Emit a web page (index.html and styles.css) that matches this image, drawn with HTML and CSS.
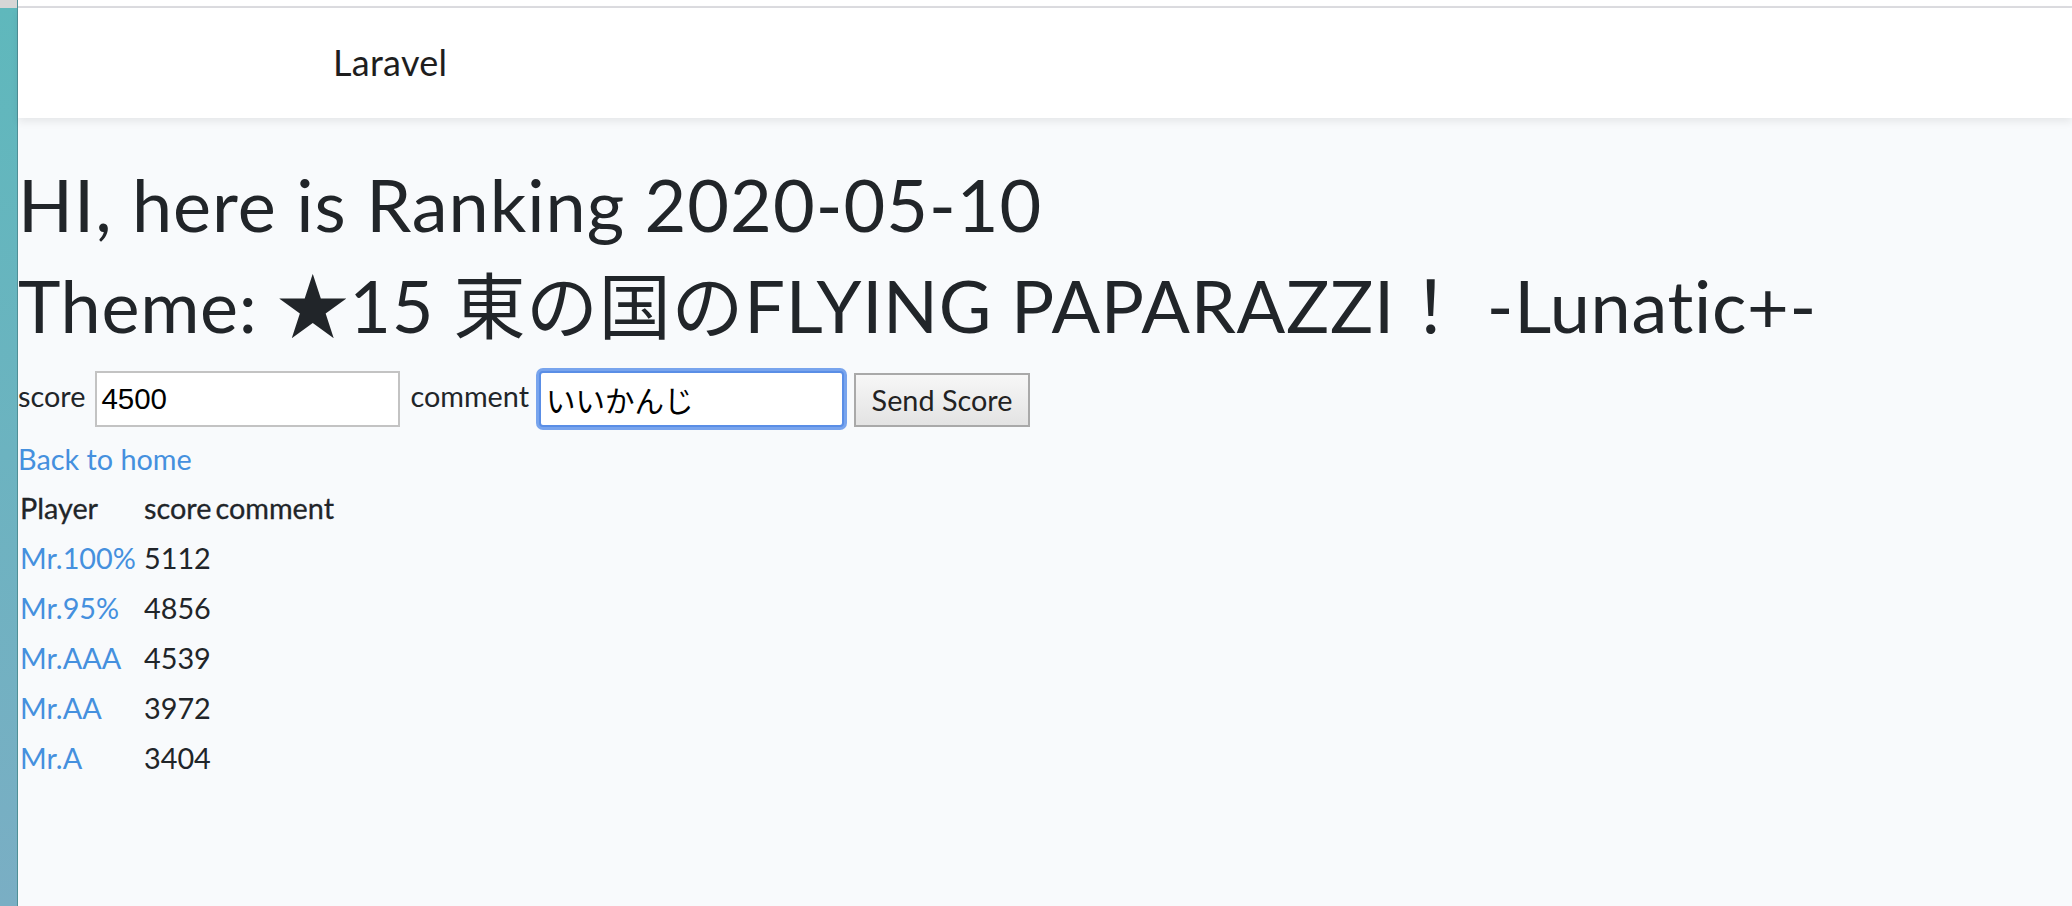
FILE: index.html
```html
<!DOCTYPE html>
<html lang="ja">
<head>
<meta charset="utf-8">
<title>Ranking</title>
<link rel="stylesheet" href="styles.css">
</head>
<body>
<div class="desktop"></div>
<div class="window">
  <div class="chrome-edge"></div>
  <nav class="navbar"><a class="brand" href="#">Laravel</a></nav>
  <main class="main">
    <h1 class="title">HI, here is Ranking 2020-05-10</h1>
    <h1 class="title title-theme">Theme: ★15 東の国のFLYING PAPARAZZI！ -Lunatic+-</h1>
    <form class="score-form">
      <label class="label">score</label>
      <input class="field" type="text" value="4500">
      <label class="label">comment</label>
      <input class="field focused" type="text" value="いいかんじ">
      <button class="send" type="button">Send Score</button>
    </form>
    <div class="back-row"><a class="link" href="#">Back to home</a></div>
    <table class="ranking">
      <thead>
        <tr><th class="col-player">Player</th><th>score</th><th>comment</th></tr>
      </thead>
      <tbody>
        <tr><td class="col-player"><a class="link" href="#">Mr.100%</a></td><td>5112</td><td></td></tr>
        <tr><td class="col-player"><a class="link" href="#">Mr.95%</a></td><td>4856</td><td></td></tr>
        <tr><td class="col-player"><a class="link" href="#">Mr.AAA</a></td><td>4539</td><td></td></tr>
        <tr><td class="col-player"><a class="link" href="#">Mr.AA</a></td><td>3972</td><td></td></tr>
        <tr><td class="col-player"><a class="link" href="#">Mr.A</a></td><td>3404</td><td></td></tr>
      </tbody>
    </table>
  </main>
</div>
</body>
</html>
```
FILE: styles.css
```css
html, body {
  margin: 0;
  height: 100%;
}
body {
  display: flex;
  background: #f8fafc;
  font-family: Lato, "Noto Sans CJK JP", sans-serif;
  font-size: 28.8px;
  line-height: 46.08px;
  color: #212529;
  overflow: hidden;
}
.desktop {
  width: 17px;
  flex: none;
  background: linear-gradient(#d6d6d6 0 8px, #5fb8bc 8px, #6cb3c0 50%, #7aaec4);
  border-right: 1px solid #4f8f96;
}
.window {
  flex: 1;
  min-width: 0;
}
.chrome-edge {
  height: 6px;
  background: #fff;
  border-bottom: 2px solid #dcdce0;
}
.navbar {
  position: relative;
  z-index: 1;
  height: 110px;
  background: #fff;
  box-shadow: 0 4px 8px rgba(0, 0, 0, 0.075);
  padding-left: 315px;
}
.brand {
  display: inline-block;
  font-size: 36px;
  line-height: 108px;
  letter-spacing: 0.3px;
  color: #1e1e1e;
  text-decoration: none;
}
.main {
  padding-top: 43px;
}
.title {
  margin: 0 0 15px;
  font-size: 72px;
  line-height: 86.4px;
  font-weight: 400;
  letter-spacing: 1px;
}
.title-theme {
  letter-spacing: 0.7px;
}
.score-form {
  display: flex;
  align-items: flex-start;
  gap: 10px;
  margin-top: 22px;
}
.label {
  line-height: 46px;
  margin-top: 2px;
}
.field {
  box-sizing: border-box;
  width: 305px;
  height: 56px;
  margin: 0;
  padding: 0 4px;
  border: 2px solid #c3c3c3;
  background: #fff;
  font-family: "Liberation Sans", "Noto Sans CJK JP", sans-serif;
  font-size: 29.5px;
  color: #000;
  outline: none;
}
.field.focused {
  border-color: #5a8ee6;
  border-radius: 4px;
  box-shadow: 0 0 0 3px rgba(98, 148, 234, 0.85);
  padding-left: 5px;
}
.send {
  box-sizing: border-box;
  width: 176px;
  height: 54px;
  margin-top: 2px;
  padding: 0;
  border: 2px solid #a9a9a9;
  background: linear-gradient(#f7f7f7, #e3e3e3);
  font-family: inherit;
  font-size: 28.8px;
  color: #222;
}
.back-row {
  margin-top: 9px;
}
.link {
  color: #4590de;
  text-decoration: none;
}
.ranking {
  border-collapse: separate;
  border-spacing: 2px;
  margin-left: -1px;
}
.ranking th,
.ranking td {
  padding: 1px;
  text-align: left;
  vertical-align: baseline;
  font-weight: 400;
}
.ranking th {
  -webkit-text-stroke: 0.3px currentColor;
}
.col-player {
  width: 120px;
}
```
